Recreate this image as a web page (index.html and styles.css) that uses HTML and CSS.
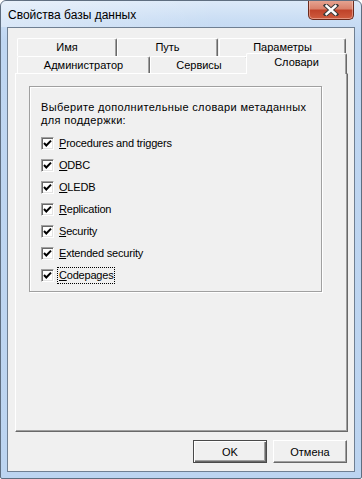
FILE: index.html
```html
<!DOCTYPE html>
<html lang="ru">
<head>
<meta charset="utf-8">
<title>Свойства базы данных</title>
<link rel="stylesheet" href="styles.css">
</head>
<body>
<div class="window">
  <div class="titlebar">
    <span class="title">Свойства базы данных</span>
    <div class="close">
      <svg width="20" height="12" viewBox="0 0 20 12">
        <path d="M5 1.5 L15 10.5 M15 1.5 L5 10.5" stroke="#3b3b3b" stroke-width="4.4" stroke-linecap="square" fill="none"/>
        <path d="M5.5 2 L14.5 10 M14.5 2 L5.5 10" stroke="#ffffff" stroke-width="2.4" stroke-linecap="square" fill="none"/>
      </svg>
    </div>
  </div>
  <div class="client">
    <div class="tabctl">
      <div class="tabrow row1">
        <div class="tab w1">Имя</div>
        <div class="tab w2">Путь</div>
        <div class="tab w3">Параметры</div>
      </div>
      <div class="tabrow row2">
        <div class="tab w4">Администратор</div>
        <div class="tab w5">Сервисы</div>
        <div class="tab w6 selected">Словари</div>
      </div>
      <div class="panel">
        <div class="group">
          <p class="intro">Выберите дополнительные словари метаданных<br>для поддержки:</p>
          <ul class="checks">
            <li><span class="cb"><svg width="9" height="9" viewBox="0 0 9 9"><path d="M1 4 L3.3 6.5 L8 1.6" stroke="#000" stroke-width="2" fill="none"/></svg></span><span class="lbl"><u>P</u>rocedures and triggers</span></li>
            <li><span class="cb"><svg width="9" height="9" viewBox="0 0 9 9"><path d="M1 4 L3.3 6.5 L8 1.6" stroke="#000" stroke-width="2" fill="none"/></svg></span><span class="lbl"><u>O</u>DBC</span></li>
            <li><span class="cb"><svg width="9" height="9" viewBox="0 0 9 9"><path d="M1 4 L3.3 6.5 L8 1.6" stroke="#000" stroke-width="2" fill="none"/></svg></span><span class="lbl"><u>O</u>LEDB</span></li>
            <li><span class="cb"><svg width="9" height="9" viewBox="0 0 9 9"><path d="M1 4 L3.3 6.5 L8 1.6" stroke="#000" stroke-width="2" fill="none"/></svg></span><span class="lbl"><u>R</u>eplication</span></li>
            <li><span class="cb"><svg width="9" height="9" viewBox="0 0 9 9"><path d="M1 4 L3.3 6.5 L8 1.6" stroke="#000" stroke-width="2" fill="none"/></svg></span><span class="lbl"><u>S</u>ecurity</span></li>
            <li><span class="cb"><svg width="9" height="9" viewBox="0 0 9 9"><path d="M1 4 L3.3 6.5 L8 1.6" stroke="#000" stroke-width="2" fill="none"/></svg></span><span class="lbl"><u>E</u>xtended security</span></li>
            <li><span class="cb"><svg width="9" height="9" viewBox="0 0 9 9"><path d="M1 4 L3.3 6.5 L8 1.6" stroke="#000" stroke-width="2" fill="none"/></svg></span><span class="lbl focus"><u>C</u>odepages</span></li>
          </ul>
        </div>
      </div>
    </div>
    <div class="buttons">
      <button class="btn default">OK</button>
      <button class="btn">Отмена</button>
    </div>
  </div>
</div>
</body>
</html>
```
FILE: styles.css
```css
* { box-sizing: border-box; }
html, body { margin: 0; padding: 0; background: #fff; }
body { font-family: "Liberation Sans", Arial, sans-serif; font-size: 11px; color: #000; }

.window {
  width: 362px;
  height: 479px;
  border: 1px solid #5f6e80;
  border-radius: 6px 6px 2px 2px;
  background: linear-gradient(180deg, #dce9f8 0px, #c9ddf4 20px, #bfd6f1 40px, #bcd4f0 100%);
  display: flex;
  flex-direction: column;
  padding: 0 6px 6px 6px;
  overflow: hidden;
}

.titlebar {
  height: 28px;
  display: flex;
  align-items: center;
  justify-content: space-between;
  margin: 0 -6px;
  padding: 0 7px 0 7px;
  background: linear-gradient(90deg, rgba(255,255,255,0.35), rgba(255,255,255,0) 60%);
}
.title {
  font-family: "Liberation Sans", Arial, sans-serif;
  font-size: 12px;
  color: #000;
  padding-top: 2px;
}
.close {
  align-self: flex-start;
  margin-top: -1px;
  width: 46px;
  height: 20px;
  border: 1px solid #6b2a1c;
  border-top: none;
  border-radius: 0 0 5px 5px;
  background: linear-gradient(180deg, #e6a795 0%, #d9826c 45%, #c0432a 55%, #cf5c3f 100%);
  box-shadow: inset 0 0 0 1px rgba(255,220,210,0.45);
  display: flex;
  align-items: center;
  justify-content: center;
}

.client {
  flex: 1;
  background: #f0f0f0;
  border: 1px solid #6f7f92;
  padding: 10px 6px 8px 7px;
  display: flex;
  flex-direction: column;
}

.tabctl { display: flex; flex-direction: column; width: 333px; }
.tabrow { display: flex; padding: 0 2px; }
.row1 { height: 18px; }
.row2 { height: 17px; }
.tab {
  height: 18px;
  border-top: 1px solid #fff;
  border-left: 1px solid #fff;
  border-right: 1px solid #696969;
  box-shadow: inset -1px 0 0 #a0a0a0;
  border-radius: 2px 2px 0 0;
  background: #f0f0f0;
  text-align: center;
  line-height: 15px;
  padding-top: 1px;
}
.row2 .tab { height: 17px; line-height: 14px; }
.w1 { width: 100px; }
.w2 { width: 101px; }
.w3 { width: 127px; margin-left: 1px; }
.w4 { width: 133px; }
.w5 { width: 98px; }
.w6 { width: 97px; }
.tab.selected {
  position: relative;
  z-index: 1;
  margin: -3px -2px -1px -2px;
  width: 101px;
  height: 21px;
  line-height: 15px;
  padding-top: 1px;
}

.panel {
  height: 359px;
  border: 1px solid;
  border-color: #fff #696969 #696969 #fff;
  box-shadow: inset -1px -1px 0 #a0a0a0;
  padding: 12px 0 0 13px;
}

.group {
  width: 293px;
  height: 206px;
  border: 1px solid #a0a0a0;
  box-shadow: 1px 1px 0 #fff, inset 1px 1px 0 #fff;
  padding: 14px 0 0 11px;
}
.intro { margin: 0; line-height: 13px; letter-spacing: 0.35px; }
.checks { list-style: none; margin: 5px 0 0 0; padding: 0; }
.checks li { height: 22px; display: flex; align-items: center; }
.cb {
  width: 13px;
  height: 13px;
  border: 1px solid;
  border-color: #a0a0a0 #fff #fff #a0a0a0;
  box-shadow: inset 1px 1px 0 #696969, inset -1px -1px 0 #e3e3e3;
  background: #fff;
  display: flex;
  align-items: center;
  justify-content: center;
  margin-right: 5px;
}
.cb svg { display: block; }
.lbl { line-height: 13px; letter-spacing: -0.2px; }
.focus { outline: 1px dotted #000; outline-offset: 1px; }

.buttons {
  display: flex;
  justify-content: flex-end;
  gap: 6px;
  margin-top: 8px;
  padding-right: 1px;
}
.btn {
  width: 74px;
  height: 23px;
  font-family: "Liberation Sans", Arial, sans-serif;
  font-size: 11px;
  color: #000;
  background: #f0f0f0;
  border: 1px solid;
  border-color: #fff #696969 #696969 #fff;
  box-shadow: inset -1px -1px 0 #a0a0a0;
  padding: 0;
  margin: 0;
}
.btn.default {
  border: 1px solid #4a4a4a;
  box-shadow: inset 1px 1px 0 #fff, inset -1px -1px 0 #696969, inset -2px -2px 0 #a0a0a0;
}
```
